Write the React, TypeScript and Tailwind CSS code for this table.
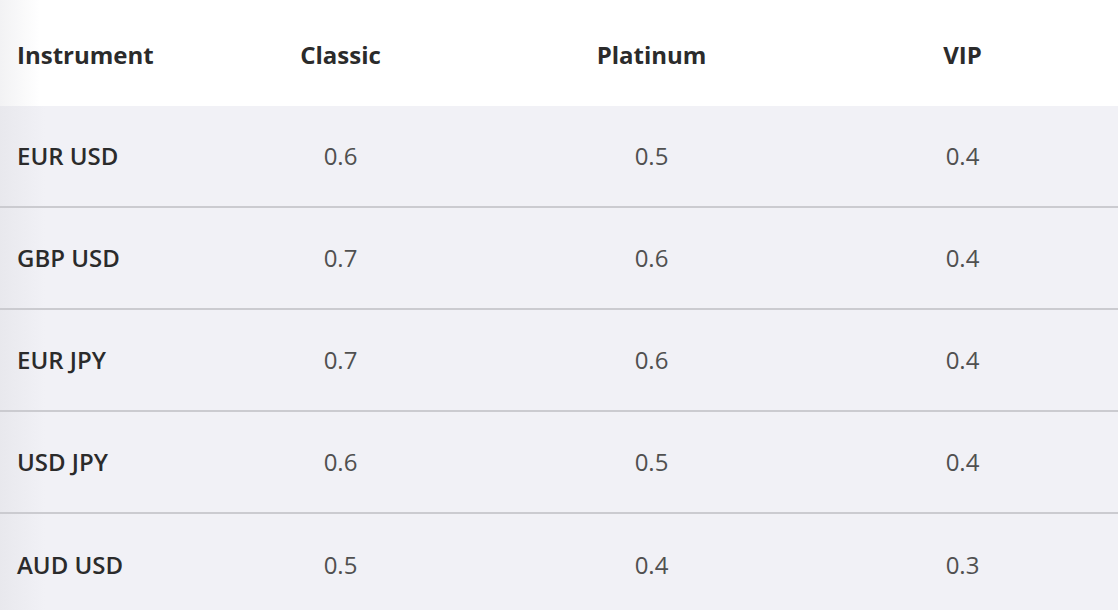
const rows = [
  { name: "EUR USD", classic: "0.6", platinum: "0.5", vip: "0.4" },
  { name: "GBP USD", classic: "0.7", platinum: "0.6", vip: "0.4" },
  { name: "EUR JPY", classic: "0.7", platinum: "0.6", vip: "0.4" },
  { name: "USD JPY", classic: "0.6", platinum: "0.5", vip: "0.4" },
  { name: "AUD USD", classic: "0.5", platinum: "0.4", vip: "0.3" },
];

export default function App() {
  return (
    <div className="w-[1118px] h-[610px] overflow-hidden bg-white font-['Open_Sans',sans-serif] text-[#2b2b2b]">
      <div className="grid grid-cols-[185px_311px_311px_311px] h-[106px] pt-1 items-center bg-[linear-gradient(to_right,#f2f2f4,#ffffff_40px)] text-[24px] font-bold">
        <div className="pl-[17px]">Instrument</div>
        <div className="text-center">Classic</div>
        <div className="text-center">Platinum</div>
        <div className="text-center">VIP</div>
      </div>
      {rows.map((r, i) => (
        <div
          key={r.name}
          className={
            "grid grid-cols-[185px_311px_311px_311px] h-[102px] items-center bg-[linear-gradient(to_right,#e8e8ed,#f1f1f6_45px)] text-[24px] " +
            (i < rows.length - 1 ? "border-b-2 border-[#cbcbd0]" : "")
          }
        >
          <div className="pl-[17px] font-semibold text-[#2b2b2b]">{r.name}</div>
          <div className="text-center text-[#505050]">{r.classic}</div>
          <div className="text-center text-[#505050]">{r.platinum}</div>
          <div className="text-center text-[#505050]">{r.vip}</div>
        </div>
      ))}
    </div>
  );
}
